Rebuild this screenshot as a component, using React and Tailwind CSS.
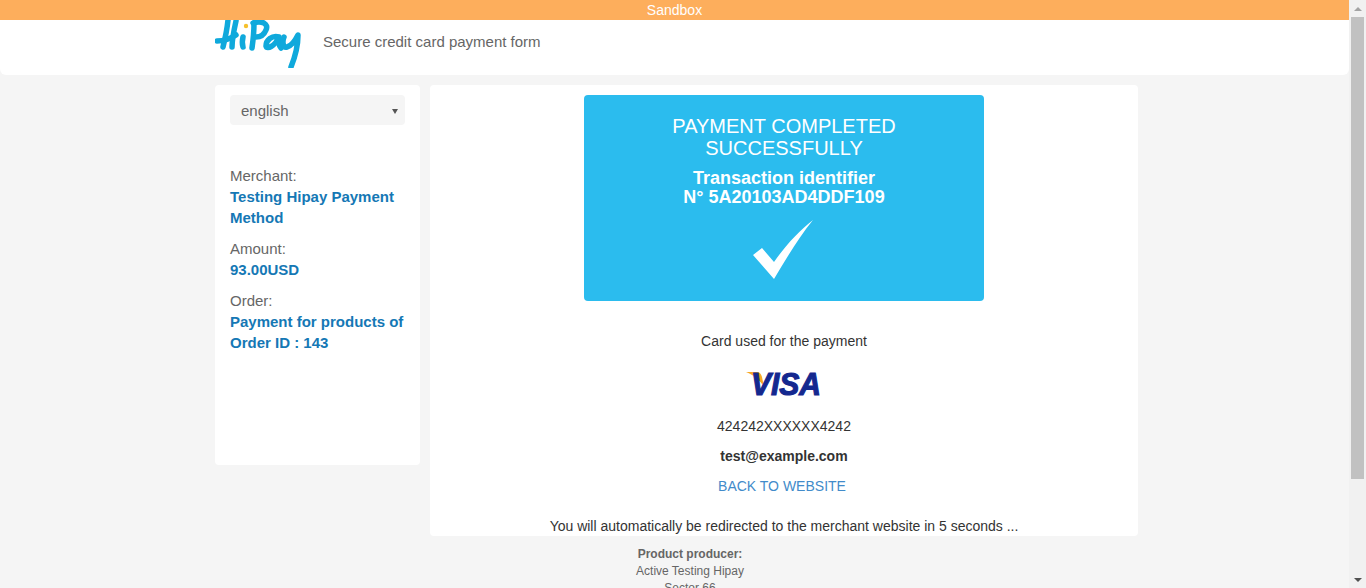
import React from "react";

function HipayLogo() {
  return (
    <svg width="86" height="48" viewBox="0 0 86 48" className="block" aria-label="HiPay">
      <g fill="none" stroke="#0fa9dc" strokeWidth="5.5" strokeLinecap="round" strokeLinejoin="round">
        <path d="M13 0 C12 10 10 19 8 27" />
        <path d="M2 21 C8 21 15 19 21 15" />
        <path d="M21 1 C19 10 17 19 17 27" />
        <path d="M28 17 C27 21 27 24 28 27" />
        <path d="M39 3 C39 12 38 21 37 28" />
        <path d="M38 3 C47 0 54 4 51 10 C49 15 45 17 41 17" />
        <path d="M64 17 C57 15 51 20 51 26 C52 30 60 26 64 17 C63 21 64 26 66 28" />
        <path d="M69 17 C67 22 68 28 72 27 C76 26 80 21 83 15 C83 25 80 37 76 47" />
      </g>
      <circle cx="31" cy="6" r="2.2" fill="#f6c02c" />
    </svg>
  );
}

function VisaLogo() {
  return (
    <svg width="76" height="36" viewBox="0 0 76 36" className="block overflow-visible" aria-label="Visa">
      <path d="M0 2 H11 C14 2 15 4 16 7 L18 17 C14 10 8 5 0 2 Z" fill="#f7a823" />
      <text x="5" y="25" fontFamily="Liberation Sans, Arial, sans-serif" fontSize="32" fontWeight="700" fontStyle="italic" fill="#14288f" stroke="#14288f" strokeWidth="1.2" textLength="70" lengthAdjust="spacingAndGlyphs">VISA</text>
    </svg>
  );
}

function Scrollbar() {
  return (
    <div className="w-[17px] h-[588px] shrink-0 bg-[#f1f1f1] flex flex-col items-center" aria-hidden="true">
      <div className="h-[17px] flex items-center justify-center">
        <div className="w-0 h-0 border-x-[4px] border-x-transparent border-b-[4px] border-b-[#a3a3a3]" />
      </div>
      <div className="w-[13px] h-[462px] bg-[#c1c1c1]" />
      <div className="flex-1" />
      <div className="h-[17px] flex items-center justify-center">
        <div className="w-0 h-0 border-x-[4px] border-x-transparent border-t-[4px] border-t-[#505050]" />
      </div>
    </div>
  );
}

function InfoItem({ label, children }) {
  return (
    <div className="mb-[10px]">
      <div className="text-[#666666] text-[15px] leading-[21px]">{label}</div>
      <div className="text-[#1578b5] font-bold text-[15px] leading-[21px]">{children}</div>
    </div>
  );
}

export default function App() {
  return (
    <div className="flex h-[588px] overflow-hidden bg-[#f5f5f5] font-['Liberation_Sans',Arial,sans-serif]">
      <div className="flex-1 h-[588px] overflow-hidden">
        <div className="h-5 bg-[#fdae5c] text-white text-sm leading-5 text-center">Sandbox</div>
        <header className="h-[55px] bg-white rounded-b-md pl-[215px] flex">
          <HipayLogo />
          <p className="ml-[22px] text-[#666666] text-[15px] leading-[44px]">Secure credit card payment form</p>
        </header>

        <div className="flex items-start gap-[10px] pl-[215px] pt-[10px]">
          <aside className="w-[205px] h-[380px] bg-white rounded-[4px] px-[15px] pt-[10px]">
            <div className="h-[30px] bg-[#f5f5f5] rounded-[4px] flex items-center justify-between pl-[11px] pr-[7px] pt-[2px] mb-[40px]">
              <span className="text-[#666666] text-[15px]">english</span>
              <div className="w-0 h-0 border-x-[3px] border-x-transparent border-t-[5px] border-t-[#555555]" />
            </div>
            <InfoItem label="Merchant:">Testing Hipay Payment Method</InfoItem>
            <InfoItem label="Amount:">93.00USD</InfoItem>
            <InfoItem label="Order:">Payment for products of Order ID : 143</InfoItem>
          </aside>

          <main className="w-[708px] h-[451px] bg-white rounded-[4px] pt-[10px] flex flex-col items-center text-[#333333] text-sm overflow-hidden">
            <div className="w-[400px] h-[206px] shrink-0 bg-[#2bbcee] rounded-[4px] text-white text-center pt-5 flex flex-col items-center">
              <h1 className="text-[20px] leading-[22px] w-[300px]">PAYMENT COMPLETED SUCCESSFULLY</h1>
              <p className="mt-[10px] text-[18px] leading-[19px] font-bold">
                Transaction identifier
                <br />
                N° 5A20103AD4DDF109
              </p>
              <svg width="62" height="60" viewBox="0 0 62 60" className="mt-[13px]">
                <path d="M0 35 L9 28 L21 42 C32 26 46 11 60 0 C46 17 33 39 21 59 Z" fill="#ffffff" />
              </svg>
            </div>

            <p className="mt-[30px] leading-5">Card used for the payment</p>
            <div className="mt-[19px]">
              <VisaLogo />
            </div>
            <p className="mt-[10px] leading-5">424242XXXXXX4242</p>
            <p className="mt-[10px] leading-5 font-bold">test@example.com</p>
            <a className="mt-[10px] mr-[4px] leading-5 text-[#428bca]" href="#">BACK TO WEBSITE</a>
            <p className="mt-[20px] leading-5">You will automatically be redirected to the merchant website in 5 seconds ...</p>
          </main>
        </div>

        <footer className="w-[300px] ml-[540px] mt-[10px] text-center text-xs leading-[17px] text-[#666666]">
          <b>Product producer:</b>
          <div>Active Testing Hipay</div>
          <div>Sector 66</div>
        </footer>
      </div>
      <Scrollbar />
    </div>
  );
}
